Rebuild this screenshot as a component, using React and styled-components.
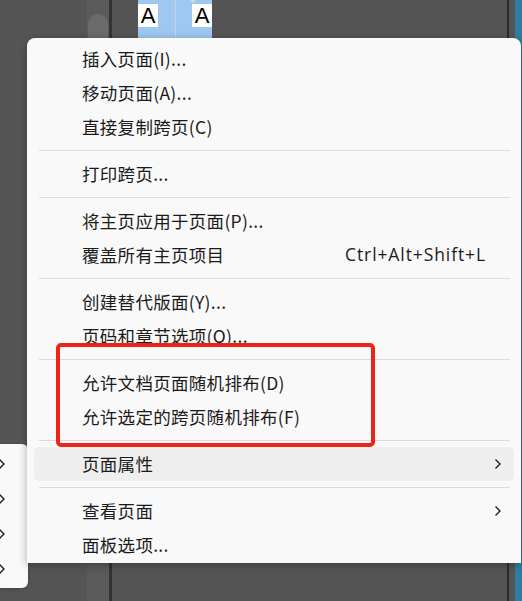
import React from "react";
import styled, { createGlobalStyle } from "styled-components";

const Global = createGlobalStyle`
  html, body { margin: 0; padding: 0; background: #545454; }
  body { font-family: "Noto Sans CJK SC", "Noto Sans", sans-serif; }
`;

const Screen = styled.div`
  position: relative;
  width: 522px;
  height: 601px;
  overflow: hidden;
  background: #545454;
  display: flex;
`;

/* 背景面板 */
const LeftArea = styled.div`
  width: 87px;
  background: #555555;
`;

const ScrollTrack = styled.div`
  width: 22px;
  background: #5b5b5b;
  padding-top: 14px;
  box-sizing: border-box;
`;

const Thumb = styled.div`
  width: 20px;
  height: 30px;
  margin-left: 1px;
  border-radius: 10px 10px 0 0;
  background: #6b6b6b;
`;

const Divider = styled.div`
  width: ${(p) => p.$w || 3}px;
  background: ${(p) => p.$c || "#333333"};
`;

const SpreadArea = styled.div`
  flex: 1;
  padding-left: 26px;
`;

const Spread = styled.div`
  position: relative;
  width: 74px;
  height: 38px;
  background: #9ec7f2;
  display: flex;
  justify-content: space-between;
  &::after {
    content: "";
    position: absolute;
    left: 37px;
    top: 0;
    width: 1px;
    height: 38px;
    background: #c9d3de;
  }
`;

const Diamond = styled.div`
  position: absolute;
  left: 52px;
  top: -4px;
  width: 6px;
  height: 6px;
  background: #d9d9d9;
  transform: rotate(45deg);
`;

const PageLabel = styled.div`
  width: 20px;
  height: 23px;
  margin-top: 4px;
  background: #ffffff;
  color: #000;
  font-family: "Liberation Sans", Arial, sans-serif;
  font-size: 22px;
  line-height: 24px;
  text-align: center;
  overflow: hidden;
`;

const Gap = styled.div`
  width: ${(p) => p.$w}px;
  background: #555555;
`;

const Teal = styled.div`
  width: 7px;
  background: #2b7fa2;
`;

/* 左侧被遮挡的子菜单 */
const SideMenu = styled.div`
  position: absolute;
  left: 0;
  top: 444px;
  width: 28px;
  height: 144px;
  background: #f9f9f9;
  border-radius: 0 6px 6px 0;
  box-shadow: 0 1px 4px rgba(0, 0, 0, 0.25);
  display: flex;
  flex-direction: column;
  padding-top: 2px;
  box-sizing: border-box;
`;

const SideRow = styled.div`
  height: 35px;
  display: flex;
  align-items: center;
`;

/* 主上下文菜单 */
const Menu = styled.div`
  position: absolute;
  left: 27px;
  top: 38px;
  width: 494px;
  height: 525px;
  box-sizing: border-box;
  background: #f9f9f9;
  border-radius: 8px 8px 0 0;
  box-shadow: 0 2px 10px rgba(0, 0, 0, 0.3);
  padding: 4px 7px 1px 7px;
  display: flex;
  flex-direction: column;
`;

const Item = styled.div`
  height: 34px;
  flex: none;
  box-sizing: border-box;
  display: flex;
  align-items: center;
  padding: 0 12px 2px 48px;
  border-radius: 5px;
  background: ${(p) => (p.$active ? "#eeeeee" : "transparent")};
  font-size: 17.5px;
  color: #1b1b1b;
  > .label {
    flex: 1;
    white-space: nowrap;
    letter-spacing: 0.3px;
  }
  > .shortcut {
    font-family: "Open Sans", "Noto Sans", sans-serif;
    font-size: 17.5px;
    letter-spacing: 0.9px;
    margin-right: 16px;
  }
  > svg {
    margin-top: 2px;
  }
`;

const Separator = styled.div`
  height: 1px;
  flex: none;
  margin: 6px 4px 6px 5px;
  background: #dcdcdc;
`;

const Highlight = styled.div`
  position: absolute;
  left: 56px;
  top: 343px;
  width: 311px;
  height: 96px;
  border: 4px solid #ee2418;
  border-radius: 5px;
`;

const Chevron = ({ x = 0 }) => (
  <svg width="8" height="12" viewBox="0 0 8 12" style={{ marginLeft: x }}>
    <path d="M1.5 1.5 L6 6 L1.5 10.5" fill="none" stroke="#1f1f1f" strokeWidth="1.4" />
  </svg>
);

const groups = [
  [{ t: "插入页面(I)..." }, { t: "移动页面(A)..." }, { t: "直接复制跨页(C)" }],
  [{ t: "打印跨页..." }],
  [{ t: "将主页应用于页面(P)..." }, { t: "覆盖所有主页项目", s: "Ctrl+Alt+Shift+L" }],
  [{ t: "创建替代版面(Y)..." }, { t: "页码和章节选项(O)..." }],
  [{ t: "允许文档页面随机排布(D)" }, { t: "允许选定的跨页随机排布(F)" }],
  [{ t: "页面属性", sub: true, active: true }],
  [{ t: "查看页面", sub: true }, { t: "面板选项..." }],
];

export default function App() {
  return (
    <>
      <Global />
      <Screen>
        <LeftArea />
        <ScrollTrack>
          <Thumb />
        </ScrollTrack>
        <Divider $w={3} />
        <SpreadArea>
          <Spread>
            <Diamond />
            <PageLabel>A</PageLabel>
            <PageLabel>A</PageLabel>
          </Spread>
        </SpreadArea>
        <Divider $w={2} $c="#2c2c2c" />
        <Gap $w={6} />
        <Teal />

        <SideMenu>
          {[0, 1, 2, 3].map((i) => (
            <SideRow key={i}>
              <Chevron x={-2} />
            </SideRow>
          ))}
        </SideMenu>

        <Menu>
          {groups.map((g, gi) => (
            <React.Fragment key={gi}>
              {gi > 0 && <Separator />}
              {g.map((it) => (
                <Item key={it.t} $active={it.active}>
                  <span className="label">{it.t}</span>
                  {it.s && <span className="shortcut">{it.s}</span>}
                  {it.sub && <Chevron />}
                </Item>
              ))}
            </React.Fragment>
          ))}
        </Menu>
        <Highlight />
      </Screen>
    </>
  );
}
